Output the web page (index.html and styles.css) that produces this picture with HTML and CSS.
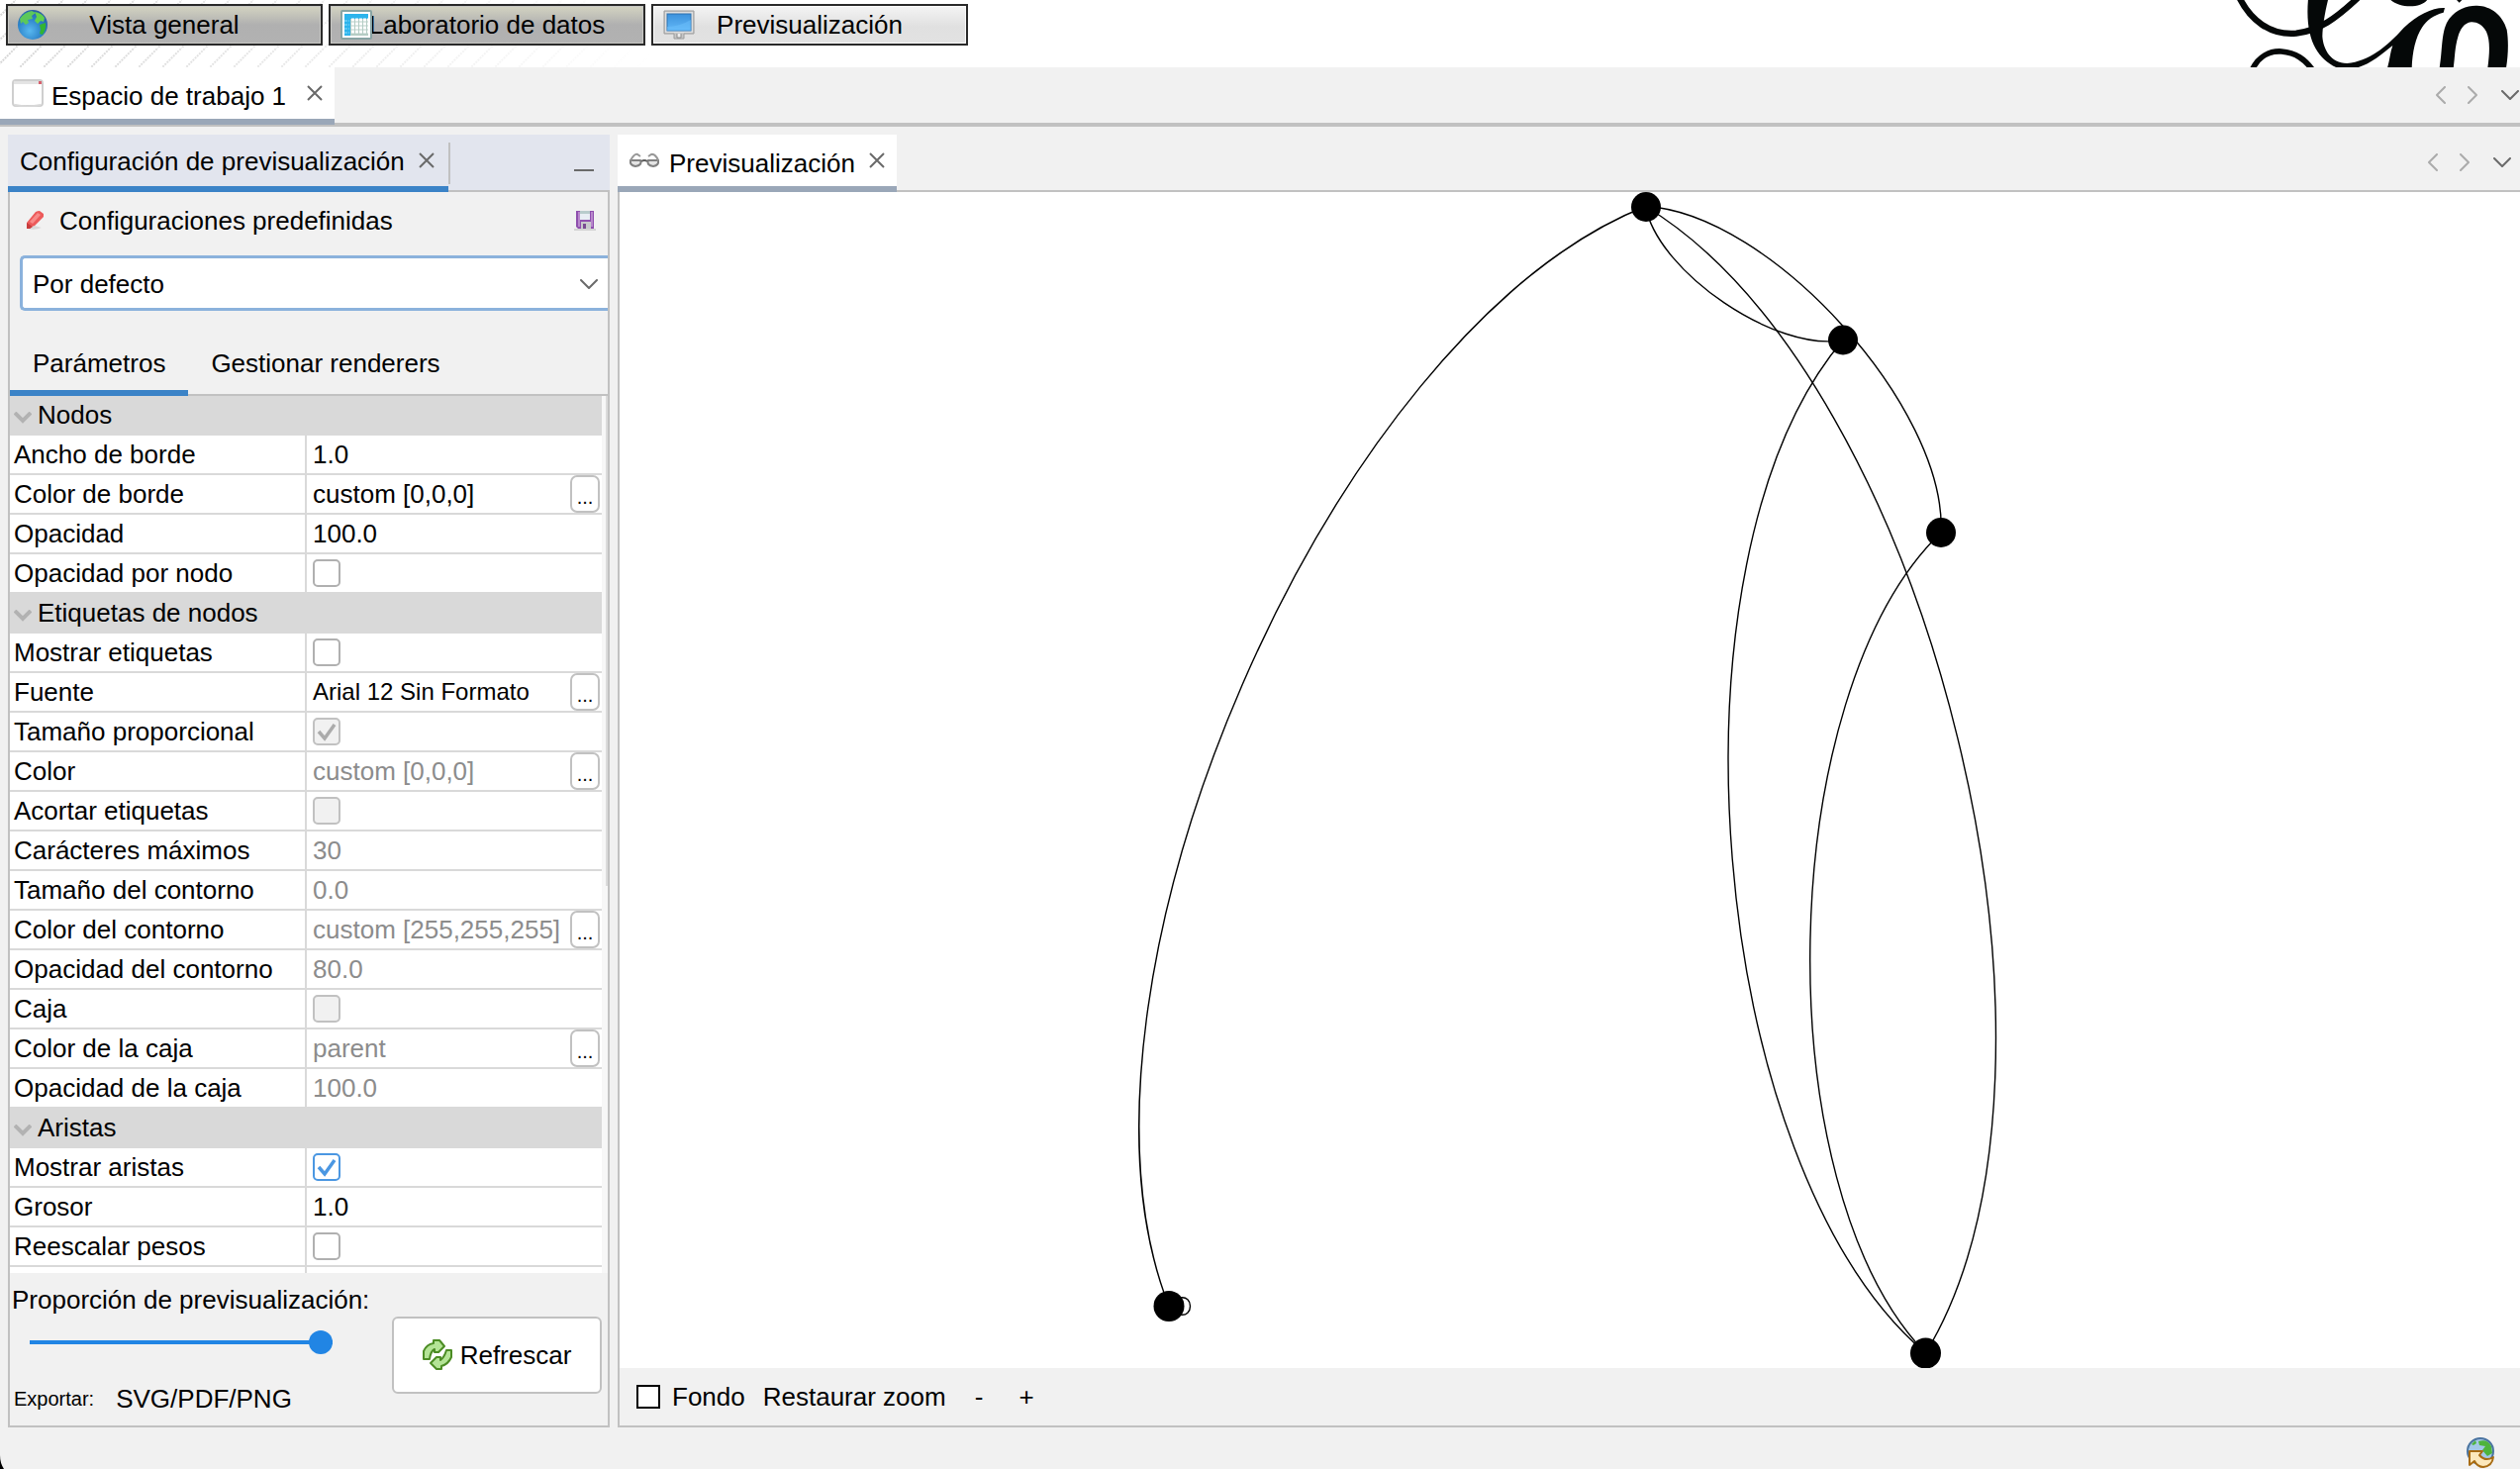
FILE: index.html
```html
<!DOCTYPE html>
<html lang="es">
<head>
<meta charset="utf-8">
<meta name="viewport" content="width=device-width, initial-scale=1">
<title>Previsualización</title>
<link rel="stylesheet" href="styles.css">
</head>
<body>
<svg class="defs" width="0" height="0" aria-hidden="true">
  <defs>
    <symbol id="close" viewBox="0 0 16 16"><path d="M1 1L15 15M15 1L1 15" fill="none" stroke="#6a6a6a" stroke-width="2"/></symbol>
    <symbol id="left" viewBox="0 0 10 18"><path d="M9 1L1 9L9 17" fill="none" stroke="#ababab" stroke-width="2" stroke-linecap="round" stroke-linejoin="round"/></symbol>
    <symbol id="right" viewBox="0 0 10 18"><path d="M1 1L9 9L1 17" fill="none" stroke="#ababab" stroke-width="2" stroke-linecap="round" stroke-linejoin="round"/></symbol>
    <symbol id="down" viewBox="0 0 18 10"><path d="M1 1L9 9L17 1" fill="none" stroke="#6a6a6a" stroke-width="2" stroke-linecap="round" stroke-linejoin="round"/></symbol>
    <symbol id="fold" viewBox="0 0 18 12"><path d="M1 1L9 9L17 1" fill="none" stroke="#b2b2b2" stroke-width="4"/></symbol>
    <radialGradient id="sea" cx=".4" cy=".7" r=".7"><stop offset="0" stop-color="#58b8f0"/><stop offset=".6" stop-color="#2c82c8"/><stop offset="1" stop-color="#2a5fa4"/></radialGradient>
    <linearGradient id="screen" x1="0" y1="0" x2="0" y2="1"><stop offset="0" stop-color="#3d92dc"/><stop offset="1" stop-color="#62b8f8"/></linearGradient>
  </defs>
</svg>

<header class="banner">
  <svg class="stripes" aria-hidden="true">
    <defs>
      <pattern id="hatch" width="24" height="24" patternUnits="userSpaceOnUse" patternTransform="translate(16 0)">
        <path d="M-2 26L26 -2" stroke="#d6d6d6" stroke-width="2" stroke-dasharray="2 1"/>
      </pattern>
    </defs>
    <rect width="100%" height="100%" fill="url(#hatch)"/>
  </svg>
  <nav class="modes">
    <button class="mode" type="button">
      <svg class="mode-icon" viewBox="0 0 30 30"><circle cx="15" cy="15" r="15" fill="url(#sea)"/><path d="M2 9Q7 2 14 1L18 3L14 6L15 9L10 10L11 13L8 15L5 12L3 14Z" fill="#5cc85a"/><path d="M17 2Q24 3 27 8L26 12L23 11L20 14L17 11L19 7Z" fill="#62d04e"/><path d="M22 15L28 13Q29 19 25 25L22 24L23 20Z" fill="#32b432"/></svg>
      Vista general
    </button>
    <button class="mode" type="button">
      <svg class="mode-icon" viewBox="0 0 32 30"><rect x="1" y="1" width="30" height="28" rx="1" fill="#fff" stroke="#88a4a4" stroke-width="2"/><path d="M4 4H28V26H4Z" fill="#b4ccc4"/><path d="M4 4H28V9H10V26H4Z" fill="#2cb4ec"/><path d="M11 10H28M11 14H28M11 18H28M11 22H28" stroke="#fff" stroke-width="3" stroke-dasharray="3 1"/><path d="M4 11H9M4 15H9M4 19H9M4 23H9" stroke="#8cdcfc" stroke-dasharray="3 1"/></svg>
      Laboratorio de datos
    </button>
    <button class="mode mode-active" type="button">
      <svg class="mode-icon" viewBox="0 0 32 30"><path d="M1 1H31V24H21V29H11V24H1Z" fill="#c6c6c6" stroke="#9c9c9c"/><rect x="2" y="2" width="28" height="21" fill="#dedede"/><rect x="4" y="4" width="24" height="17" fill="url(#screen)" stroke="#2e72b0"/><path d="M4 17Q16 17 28 10V21H4Z" fill="#6cc0fc" opacity=".5"/><path d="M14 24V28H18V24" fill="#eee" stroke="#8c8c8c"/></svg>
      Previsualización
    </button>
  </nav>
  <svg class="logo" viewBox="0 0 978 204" aria-label="Gephi">
    <g fill="none" stroke="#050808">
      <path d="M126 -10C160 60 220 108 300 101C370 92 420 56 486 -6" stroke-width="19"/>
      <path d="M166 212C185 170 220 154 255 156C300 160 325 180 348 210" stroke-width="17"/>
    </g>
    <g fill="#050808">
      <path d="M336 -4H397C386 40 380 80 379 110C382 150 404 190 454 192C520 185 570 146 626 84C668 44 715 22 750 24L746 38C716 46 694 62 682 82C660 115 652 160 650 206H576C584 180 584 160 592 138C560 164 520 198 480 206H425C365 180 325 120 336 -4Z"/>
      <path d="M734 206C744 150 738 90 764 56C785 28 818 16 848 17C890 18 926 46 938 90C944 125 942 170 936 206H880C886 160 888 122 876 96C864 74 846 66 830 67C808 70 797 88 790 112C780 145 781 175 776 206Z"/>
      <path d="M584 -2H698C680 26 612 26 584 -2ZM784 -2H804L794 8Z"/>
    </g>
  </svg>
</header>

<div class="workspace-bar">
  <div class="tab workspace-tab">
    <svg class="window-icon" viewBox="0 0 32 28"><rect x="1" y="1" width="30" height="26" rx="3" fill="#fff" stroke="#cfcfcf" stroke-width="2"/><path d="M2 2H30V5H2Z" fill="#e4e4e4"/><path d="M27 2H30V5H27Z" fill="#d8606c"/><path d="M3 26Q16 29 29 26" stroke="#d8d8d8" stroke-width="2" fill="none"/></svg>
    <span class="tab-title low">Espacio de trabajo 1</span>
    <button class="icon-button" type="button" aria-label="Cerrar"><svg width="16" height="16"><use href="#close"/></svg></button>
  </div>
  <div class="tab-nav workspace-nav">
    <button class="icon-button" type="button" aria-label="Anterior"><svg width="10" height="18"><use href="#left"/></svg></button>
    <button class="icon-button" type="button" aria-label="Siguiente"><svg width="10" height="18"><use href="#right"/></svg></button>
    <button class="icon-button" type="button" aria-label="Lista"><svg width="18" height="10"><use href="#down"/></svg></button>
  </div>
</div>

<main class="panels">
  <section class="panel settings">
    <div class="panel-bar focused">
      <div class="tab settings-tab">
        <span class="tab-title">Configuración de previsualización</span>
        <button class="icon-button" type="button" aria-label="Cerrar"><svg width="16" height="16"><use href="#close"/></svg></button>
      </div>
      <span class="tab-divider"></span>
      <button class="icon-button minimize" type="button" aria-label="Minimizar"><svg width="20" height="2"><rect width="20" height="2" fill="#6a6a6a"/></svg></button>
    </div>
    <div class="settings-body">
      <div class="presets">
        <svg width="18" height="20" viewBox="0 0 18 20"><path d="M2 18Q9 20 16 17L9 15Z" fill="#d8d8d8"/><path d="M1 12L10 1Q12 0 14 0L18 3V6L9 15L6 16L4 18H1Z" fill="#ec5a5a"/><path d="M4 11L12 2L15 4L7 13Z" fill="#f88a88"/><path d="M1 12L7 16L4 18H1Z" fill="#c83c3c"/></svg>
        <label class="presets-title" for="preset">Configuraciones predefinidas</label>
        <button class="icon-button" type="button" aria-label="Guardar"><svg width="22" height="20" viewBox="0 0 22 20"><path d="M0 18H22V20H0Z" fill="#d4d4d4"/><path d="M2 0H20V18H4L2 16Z" fill="#8f4fae"/><path d="M4 1H6V16H4ZM17 1H19V16H17Z" fill="#b888cc"/><path d="M6 0H16V9H6Z" fill="#e8eef4"/><path d="M6 0H16V3H6Z" fill="#b8cccc"/><path d="M7 11H17V18H7Z" fill="#c8c8cc"/><path d="M9 13H12V18H9Z" fill="#7a4a92"/></svg></button>
      </div>
      <div class="preset-box">
        <select class="preset-select" id="preset"><option>Por defecto</option></select>
        <svg class="preset-arrow" width="18" height="10"><use href="#down"/></svg>
      </div>
      <div class="subtabs">
        <button class="subtab subtab-active" type="button">Parámetros</button>
        <button class="subtab" type="button">Gestionar renderers</button>
      </div>
      <div class="sheet">
        <div class="sheet-clip">
        <table class="properties">
          <colgroup><col class="name-col"><col></colgroup>
          <tbody>
            <tr class="group"><th colspan="2"><svg class="fold" width="18" height="12"><use href="#fold"/></svg>Nodos</th></tr>
            <tr><th scope="row">Ancho de borde</th><td>1.0</td></tr>
            <tr><th scope="row">Color de borde</th><td><div class="cell">custom [0,0,0]<button class="more" type="button">...</button></div></td></tr>
            <tr><th scope="row">Opacidad</th><td>100.0</td></tr>
            <tr><th scope="row"><label for="per-node">Opacidad por nodo</label></th><td><input class="check" id="per-node" type="checkbox"></td></tr>
            <tr class="group"><th colspan="2"><svg class="fold" width="18" height="12"><use href="#fold"/></svg>Etiquetas de nodos</th></tr>
            <tr><th scope="row"><label for="labels">Mostrar etiquetas</label></th><td><input class="check" id="labels" type="checkbox"></td></tr>
            <tr><th scope="row">Fuente</th><td><div class="cell"><span class="font-name">Arial 12 Sin Formato</span><button class="more" type="button">...</button></div></td></tr>
            <tr><th scope="row"><label for="proportional">Tamaño proporcional</label></th><td><input class="check" id="proportional" type="checkbox" checked disabled></td></tr>
            <tr class="off"><th scope="row">Color</th><td><div class="cell">custom [0,0,0]<button class="more" type="button">...</button></div></td></tr>
            <tr><th scope="row"><label for="shorten">Acortar etiquetas</label></th><td><input class="check" id="shorten" type="checkbox" disabled></td></tr>
            <tr class="off"><th scope="row">Carácteres máximos</th><td>30</td></tr>
            <tr class="off"><th scope="row">Tamaño del contorno</th><td>0.0</td></tr>
            <tr class="off"><th scope="row">Color del contorno</th><td><div class="cell">custom [255,255,255]<button class="more" type="button">...</button></div></td></tr>
            <tr class="off"><th scope="row">Opacidad del contorno</th><td>80.0</td></tr>
            <tr><th scope="row"><label for="box">Caja</label></th><td><input class="check" id="box" type="checkbox" disabled></td></tr>
            <tr class="off"><th scope="row">Color de la caja</th><td><div class="cell">parent<button class="more" type="button">...</button></div></td></tr>
            <tr class="off"><th scope="row">Opacidad de la caja</th><td>100.0</td></tr>
            <tr class="group"><th colspan="2"><svg class="fold" width="18" height="12"><use href="#fold"/></svg>Aristas</th></tr>
            <tr><th scope="row"><label for="edges">Mostrar aristas</label></th><td><input class="check" id="edges" type="checkbox" checked></td></tr>
            <tr><th scope="row">Grosor</th><td>1.0</td></tr>
            <tr><th scope="row"><label for="rescale">Reescalar pesos</label></th><td><input class="check" id="rescale" type="checkbox"></td></tr>
            <tr><th></th><td></td></tr>
          </tbody>
        </table>
        </div>
        <div class="scrollbar"><div class="thumb"></div></div>
      </div>
      <div class="settings-footer">
        <label for="ratio">Proporción de previsualización:</label>
        <div class="footer-row">
          <div class="footer-left">
            <input class="ratio" id="ratio" type="range" min="0" max="100" value="100">
            <div class="export"><span class="export-label">Exportar:</span><button class="flat" type="button">SVG/PDF/PNG</button></div>
          </div>
          <button class="refresh" type="button">
            <svg width="30" height="32" viewBox="0 0 30 32"><g fill="#b4e496" stroke="#4c8c24" stroke-width="2" stroke-linejoin="round"><path d="M1 20V12Q4 5 11 4V1H17L22 7L16 13H12V10Q8 12 7 20Z"/><path d="M29 11V18Q26 25 19 27V30H14L8 24L14 18H18V21Q22 18 24 11Z"/></g></svg>
            Refrescar
          </button>
        </div>
      </div>
    </div>
  </section>

  <section class="panel preview">
    <div class="panel-bar">
      <div class="tab preview-tab">
        <svg width="30" height="16" viewBox="0 0 30 16"><g fill="none" stroke="#808080" stroke-width="2"><path d="M1 8H11Q13 13 6 14Q0 13 1 8ZM19 8H29Q30 13 24 14Q17 13 19 8Z" fill="#e4e4e4"/><path d="M12 9Q15 7 18 9" stroke="#5c5c5c"/><path d="M1 8Q5 1 8 2L11 4M29 8Q26 1 22 2L19 4" stroke="#989898"/></g></svg>
        <span class="tab-title low">Previsualización</span>
        <button class="icon-button" type="button" aria-label="Cerrar"><svg width="16" height="16"><use href="#close"/></svg></button>
      </div>
      <div class="tab-nav">
        <button class="icon-button" type="button" aria-label="Anterior"><svg width="10" height="18"><use href="#left"/></svg></button>
        <button class="icon-button" type="button" aria-label="Siguiente"><svg width="10" height="18"><use href="#right"/></svg></button>
        <button class="icon-button" type="button" aria-label="Lista"><svg width="18" height="10"><use href="#down"/></svg></button>
      </div>
    </div>
    <div class="preview-body">
      <svg class="graph" viewBox="626 194 1920 1188">
        <g fill="none" stroke="#000" stroke-width="1.4">
          <path d="M1662.5 208.5C1344 334.4 1055.1 1001 1181 1319.5"/>
          <path d="M1662.5 208.5C1675.4 275.4 1795.1 356.4 1862 343.5"/>
          <path d="M1662.5 208.5C1788.1 214.7 1967.2 412.4 1961 538"/>
          <path d="M1662.5 208.5C1950.8 383.6 2120.6 1078.7 1945.5 1367"/>
          <path d="M1862 343.5C1674 564.9 1724.1 1179 1945.5 1367"/>
          <path d="M1961 538C1792.1 700.7 1782.8 1198.1 1945.5 1367"/>
          <path d="M1192 1311C1206 1308 1206 1331 1192 1328"/>
        </g>
        <g fill="#000">
          <circle cx="1663" cy="209" r="15"/>
          <circle cx="1862" cy="343.5" r="15"/>
          <circle cx="1961" cy="538" r="15"/>
          <circle cx="1181" cy="1319.5" r="15.5"/>
          <circle cx="1945.5" cy="1367" r="15.5"/>
        </g>
      </svg>
      <div class="preview-tools">
        <input class="background-box" id="background" type="checkbox"><label class="background-label" for="background">Fondo</label>
        <button class="flat" type="button">Restaurar zoom</button>
        <div class="zoom">
          <button class="flat" type="button">-</button>
          <button class="flat" type="button">+</button>
        </div>
      </div>
    </div>
  </section>
</main>

<footer class="status">
  <svg class="window-corner" width="4" height="14" viewBox="0 0 4 14"><path d="M0 0Q0 8 4 14H0Z"/></svg>
  <svg width="30" height="32" viewBox="0 0 30 32"><circle cx="15" cy="14" r="13" fill="#a4c8e8" stroke="#4a74a0" stroke-width="2"/><path d="M13 4Q22 1 26 9L27 16L22 19L17 13L20 9L14 8ZM6 7L10 3L11 6L8 8Z" fill="#4eb43c"/><path d="M4 14H17L14 18Q20 25 28 20Q27 29 18 30Q12 30 9 24L4 28Z" fill="#fce8bc" stroke="#a86c14" stroke-width="2" stroke-linejoin="round"/></svg>
</footer>
</body>
</html>
```

FILE: styles.css
```css
* { box-sizing: border-box; }

body {
  margin: 0;
  height: 100vh;
  display: flex;
  flex-direction: column;
  overflow: hidden;
  background: #f1f1f1;
  color: #000;
  font: 26px/30px "Liberation Sans", Arial, sans-serif;
}

button, select, input { font: inherit; color: inherit; margin: 0; }
svg { display: block; flex: none; }
.defs { position: absolute; }

.icon-button {
  display: flex;
  padding: 0;
  border: 0;
  background: none;
}

.flat { padding: 0; border: 0; background: none; }

/* Banner */
.banner {
  position: relative;
  display: flex;
  justify-content: space-between;
  height: 68px;
  flex: none;
  background: #fff;
}
.stripes {
  position: absolute;
  inset: 0;
  width: 660px;
  height: 68px;
  mask-image: linear-gradient(90deg, #000, transparent);
}
.modes {
  position: relative;
  display: flex;
  gap: 6px;
  padding: 4px 6px;
}
.mode {
  position: relative;
  width: 320px;
  height: 42px;
  padding: 0;
  border: 2px solid #2a2a2a;
  background: linear-gradient(#d4d4c2, #b0b0b0 50%, #b2b2b2);
  box-shadow: inset 0 0 0 1px #c8c8c4;
  white-space: nowrap;
}
.mode-active {
  background: linear-gradient(#f4f4f4, #e0e0e0 55%, #e2e2e2);
  box-shadow: inset 0 0 0 1px #fafafa;
}
.mode-icon {
  position: absolute;
  left: 10px;
  top: 4px;
  height: 30px;
}
.logo { width: 326px; height: 68px; }

/* Tabs */
.tab {
  display: flex;
  align-items: center;
  border-bottom: 6px solid #9aa7b8;
  background: #fff;
  white-space: nowrap;
}
.low { padding-top: 5px; }
.workspace-bar {
  display: flex;
  justify-content: space-between;
  height: 60px;
  flex: none;
  background: linear-gradient(#c1c1c1, #c1c1c1) bottom / 100% 4px no-repeat;
}
.workspace-tab { height: 58px; padding: 0 12px; gap: 8px; }
.workspace-tab .icon-button { margin-left: 13px; }
.window-icon { width: 32px; height: 28px; }
.tab-nav {
  display: flex;
  align-items: center;
  gap: 22px;
  padding: 0 9px 2px 0;
}
.tab-nav .icon-button:last-child { margin-left: 2px; }
.workspace-nav { padding: 0 1px 4px 0; }

/* Panels */
.panels {
  display: flex;
  flex: 1;
  min-height: 0;
  gap: 8px;
  padding: 8px 0 0 8px;
}
.panel { display: flex; flex-direction: column; min-height: 0; }
.settings { width: 608px; flex: none; }
.preview { flex: 1; min-width: 0; }
.panel-bar {
  display: flex;
  justify-content: space-between;
  height: 58px;
  flex: none;
  background: linear-gradient(#c1c1c1, #c1c1c1) bottom / 100% 2px no-repeat;
}
.focused {
  justify-content: flex-start;
  align-items: center;
  background-color: #e2e5ee;
}
.settings-tab {
  height: 58px;
  padding: 0 14px 0 12px;
  gap: 14px;
  border-color: #3b83c7;
  background: none;
}
.settings-tab .tab-title { padding-top: 1px; }
.tab-divider { width: 2px; height: 42px; background: #c1c1c1; }
.minimize { margin: 14px 16px 0 auto; }
.preview-tab { padding: 0 12px; gap: 10px; }
.preview-tab .icon-button { margin-left: 4px; }

/* Settings */
.settings-body {
  display: flex;
  flex-direction: column;
  flex: 1;
  min-height: 0;
  border: solid #c1c1c1;
  border-width: 0 2px 2px;
}
.presets {
  display: flex;
  align-items: center;
  padding: 14px 12px 14px 16px;
  gap: 16px;
}
.presets-title { flex: 1; }
.preset-box { position: relative; margin: 6px 0 0 10px; }
.preset-select {
  display: block;
  width: 100%;
  height: 56px;
  padding: 1px 10px 0;
  border: 3px solid #8bb2dc;
  border-right: 0;
  border-radius: 5px 0 0 5px;
  background: #fff;
  appearance: none;
  outline: 0;
}
.preset-arrow {
  position: absolute;
  right: 10px;
  top: 24px;
  pointer-events: none;
}
.subtabs {
  display: flex;
  height: 66px;
  flex: none;
  margin-top: 20px;
  background: linear-gradient(#c1c1c1, #c1c1c1) bottom / 100% 2px no-repeat;
}
.subtab {
  padding: 6px 23px 0;
  border: 0;
  border-bottom: 6px solid transparent;
  background: none;
}
.subtab-active { border-color: #3b83c7; }

/* Property sheet */
.sheet { display: flex; flex: 1; min-height: 0; }
.sheet-clip { flex: 1; overflow: hidden; }
.scrollbar { width: 6px; background: #f7f7f7; }
.thumb { width: 2px; height: 495px; margin-left: 4px; background: #dbdbdb; }
.properties {
  width: 100%;
  table-layout: fixed;
  border-collapse: separate;
  border-spacing: 0;
  background: #fff;
}
.name-col { width: 300px; }
.properties th,
.properties td {
  height: 40px;
  padding: 0 0 0 4px;
  border-bottom: 2px solid #d9d9d9;
  font-weight: normal;
  text-align: left;
  vertical-align: middle;
  white-space: nowrap;
}
.properties th { border-right: 2px solid #d9d9d9; }
.properties td { padding-left: 6px; }
.properties .group th { background: #d9d9d9; border-color: #d9d9d9; }
.fold { display: inline-block; margin-right: 6px; }
.off td { color: #8c8c8c; }
.cell {
  display: flex;
  align-items: center;
  justify-content: space-between;
  height: 38px;
  padding-right: 2px;
}
.font-name { font-size: 24px; }
.more {
  width: 30px;
  height: 38px;
  padding: 6px 0 0;
  border: 2px solid #c1c1c1;
  border-radius: 7px;
  background: #fff;
  color: #000;
  font-size: 20px;
  line-height: 24px;
}
.check {
  display: block;
  width: 28px;
  height: 28px;
  border: 2px solid #b0b0b0;
  border-radius: 5px;
  background: #fff center / 24px 24px no-repeat;
  appearance: none;
}
.check:checked {
  border-color: #4b97e2;
  background-image: url("data:image/svg+xml,%3Csvg xmlns='http://www.w3.org/2000/svg' viewBox='0 0 24 24'%3E%3Cpath d='M4 12L10 19L20 5' fill='none' stroke='%234b97e2' stroke-width='3.5'/%3E%3C/svg%3E");
}
.check:disabled { border-color: #c1c1c1; background-color: #f1f1f1; }
.check:disabled:checked {
  background-image: url("data:image/svg+xml,%3Csvg xmlns='http://www.w3.org/2000/svg' viewBox='0 0 24 24'%3E%3Cpath d='M4 12L10 19L20 5' fill='none' stroke='%23ababab' stroke-width='3.5'/%3E%3C/svg%3E");
}

/* Settings footer */
.settings-footer { height: 154px; flex: none; padding: 12px 6px 0 2px; }
.settings-footer > label { display: block; height: 32px; line-height: 30px; }
.footer-row { display: flex; justify-content: space-between; }
.ratio {
  display: block;
  width: 306px;
  height: 24px;
  margin: 14px 0 0 18px;
  background: linear-gradient(#2185e4, #2185e4) center / 100% 4px no-repeat;
  appearance: none;
}
.ratio::-webkit-slider-thumb {
  width: 24px;
  height: 24px;
  border-radius: 50%;
  background: #2185e4;
  appearance: none;
}
.export { display: flex; align-items: center; gap: 22px; margin-top: 30px; }
.export-label { font-size: 20px; padding-left: 2px; }
.refresh {
  display: flex;
  align-items: center;
  justify-content: center;
  gap: 8px;
  width: 212px;
  height: 78px;
  padding: 0;
  border: 2px solid #c1c1c1;
  border-radius: 6px;
  background: #fff;
}

/* Preview */
.preview-body {
  display: flex;
  flex-direction: column;
  flex: 1;
  min-height: 0;
  border: solid #c1c1c1;
  border-width: 0 0 2px 2px;
}
.graph { width: 100%; flex: 1; min-height: 0; background: #fff; }
.preview-tools {
  display: flex;
  align-items: center;
  height: 58px;
  flex: none;
  padding-left: 17px;
}
.background-box {
  width: 24px;
  height: 24px;
  border: 2px solid #000;
  background: #fff;
  appearance: none;
}
.background-label { margin: 0 18px 0 12px; }
.zoom { display: flex; gap: 36px; margin-left: 29px; }

/* Status bar */
.status {
  display: flex;
  align-items: flex-end;
  justify-content: space-between;
  height: 42px;
  flex: none;
  padding-right: 25px;
}
```
